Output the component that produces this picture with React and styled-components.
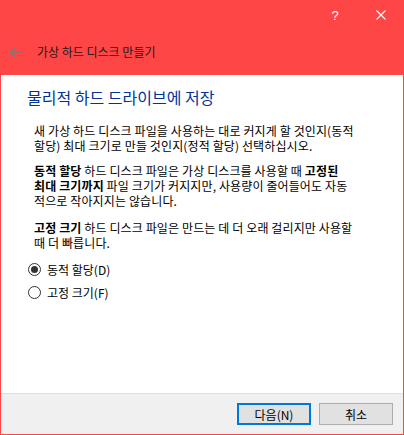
import React from 'react';
import styled, { createGlobalStyle } from 'styled-components';

const GlobalStyle = createGlobalStyle`
  html, body {
    margin: 0;
    padding: 0;
    background: #ffffff;
  }
  body {
    font-family: "Noto Sans CJK KR", "Noto Sans", sans-serif;
    font-size: 12px;
    color: #000000;
  }
`;

const Window = styled.div`
  width: 404px;
  height: 435px;
  box-sizing: border-box;
  display: flex;
  flex-direction: column;
  background: #ff4646;
  border: 1px solid #ff4646;
  border-top: none;
`;

const Header = styled.div`
  display: flex;
  flex-direction: column;
  height: 75px;
`;

const CaptionBar = styled.div`
  display: flex;
  justify-content: flex-end;
  height: 30px;
  margin-right: -1px;
`;

const CaptionButton = styled.div`
  width: 46px;
  height: 30px;
  display: flex;
  align-items: center;
  justify-content: center;
  color: #ffffff;
  font-family: "Liberation Sans", sans-serif;
  font-size: 13px;
`;

const NavRow = styled.div`
  flex: 1;
  display: flex;
  align-items: center;
  padding-left: 8px;
  padding-bottom: 1px;
`;

const BackButton = styled.div`
  width: 14px;
  height: 12px;
  display: flex;
  align-items: center;
  margin-right: 14px;
`;

const WizardTitle = styled.div`
  font-size: 12px;
  line-height: 16px;
  color: #1a1a1a;
`;

const Body = styled.div`
  flex: 1;
  background: #ffffff;
  padding: 12px 0 0 26px;
  display: flex;
  flex-direction: column;
`;

const Heading = styled.div`
  font-size: 16px;
  line-height: 20px;
  color: #003399;
  margin-bottom: 16px;
`;

const Paragraph = styled.p`
  margin: 0 0 ${p => p.$gap}px 7px;
  line-height: 15px;
  white-space: nowrap;
  font-size: 12px;
  letter-spacing: 0.12px;
`;

const RadioList = styled.div`
  display: flex;
  flex-direction: column;
  margin-top: 1px;
`;

const RadioRow = styled.label`
  display: flex;
  align-items: center;
  height: 23px;
  padding-left: 1px;
  gap: 6px;
`;

const RadioCircle = styled.span`
  width: 13px;
  height: 13px;
  box-sizing: border-box;
  border-radius: 50%;
  border: 1px solid #333333;
  background: #ffffff;
  display: flex;
  align-items: center;
  justify-content: center;
  &::after {
    content: '';
    width: 7px;
    height: 7px;
    border-radius: 50%;
    background: ${p => (p.$checked ? '#333333' : 'transparent')};
  }
`;

const Footer = styled.div`
  height: 41px;
  box-sizing: border-box;
  background: #f0f0f0;
  border-top: 1px solid #dfdfdf;
  display: flex;
  justify-content: flex-end;
  align-items: flex-start;
  gap: 8px;
  padding: 9px 10px 0 0;
`;

const Button = styled.div`
  width: 74px;
  height: 22px;
  box-sizing: border-box;
  display: flex;
  align-items: center;
  justify-content: center;
  background: #e1e1e1;
  border: ${p => (p.$default ? '2px solid #0078d7' : '1px solid #adadad')};
  font-size: 12px;
`;

const App = () => (
  <>
    <GlobalStyle />
    <Window>
      <Header>
        <CaptionBar>
          <CaptionButton>?</CaptionButton>
          <CaptionButton>
            <svg width="10" height="10" viewBox="0 0 10 10">
              <path d="M0.5 0.5 L9.5 9.5 M9.5 0.5 L0.5 9.5" stroke="#ffffff" strokeWidth="1.1" fill="none" />
            </svg>
          </CaptionButton>
        </CaptionBar>
        <NavRow>
          <BackButton>
            <svg width="14" height="12" viewBox="0 0 14 12">
              <path d="M13 6 H1.5 M6.5 1 L1.5 6 L6.5 11" stroke="#7a7a7a" strokeWidth="1.6" fill="none" />
            </svg>
          </BackButton>
          <WizardTitle>가상 하드 디스크 만들기</WizardTitle>
        </NavRow>
      </Header>
      <Body>
        <Heading>물리적 하드 드라이브에 저장</Heading>
        <Paragraph $gap={10}>
          새 가상 하드 디스크 파일을 사용하는 대로 커지게 할 것인지(동적<br />
          할당) 최대 크기로 만들 것인지(정적 할당) 선택하십시오.
        </Paragraph>
        <Paragraph $gap={12}>
          <b>동적 할당</b> 하드 디스크 파일은 가상 디스크를 사용할 때 <b>고정된</b><br />
          <b>최대 크기까지</b> 파일 크기가 커지지만, 사용량이 줄어들어도 자동<br />
          적으로 작아지지는 않습니다.
        </Paragraph>
        <Paragraph $gap={7}>
          <b>고정 크기</b> 하드 디스크 파일은 만드는 데 더 오래 걸리지만 사용할<br />
          때 더 빠릅니다.
        </Paragraph>
        <RadioList>
          <RadioRow>
            <RadioCircle $checked />
            동적 할당(D)
          </RadioRow>
          <RadioRow>
            <RadioCircle />
            고정 크기(F)
          </RadioRow>
        </RadioList>
      </Body>
      <Footer>
        <Button $default>다음(N)</Button>
        <Button>취소</Button>
      </Footer>
    </Window>
  </>
);

export default App;
